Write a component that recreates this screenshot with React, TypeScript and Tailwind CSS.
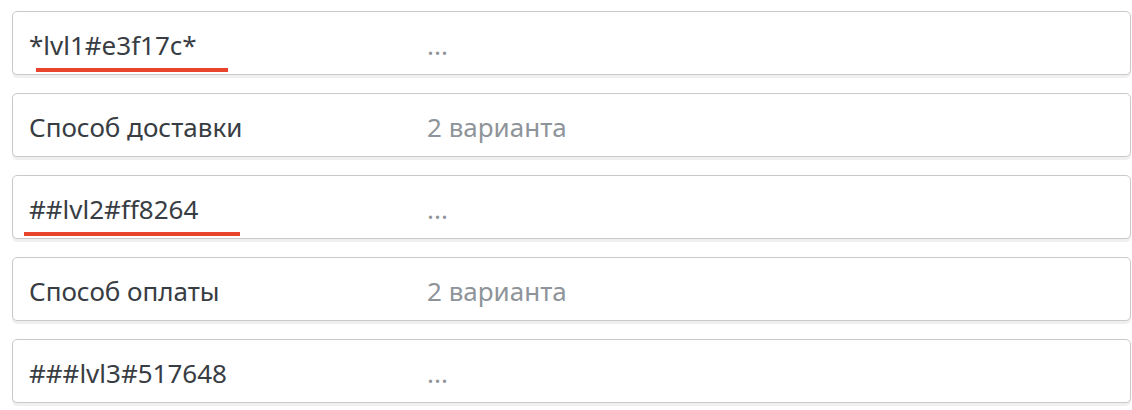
import React from "react";

type Row = {
  label: string;
  value: string;
  mark?: { left: number; width: number };
};

const rows: Row[] = [
  { label: "*lvl1#e3f17c*", value: "...", mark: { left: 23, width: 192 } },
  { label: "Способ доставки", value: "2 варианта" },
  { label: "##lvl2#ff8264", value: "...", mark: { left: 11, width: 216 } },
  { label: "Способ оплаты", value: "2 варианта" },
  { label: "###lvl3#517648", value: "..." },
];

function FieldRow({ row }: { row: Row }) {
  return (
    <div className="relative flex items-center h-[64px] rounded-[5px] border border-[#c9c9c9] bg-white pl-4 pt-[5px] shadow-[0_3px_0_#efefef]">
      <span className="w-[398px] shrink-0 text-[26px] text-[#383d43]">{row.label}</span>
      <span className="text-[26px] text-[#8e9499]">{row.value}</span>
      {row.mark && (
        <div
          className="absolute bottom-[2px] h-[4px] bg-[#e8432b]"
          style={{ left: row.mark.left, width: row.mark.width }}
        />
      )}
    </div>
  );
}

export default function App() {
  return (
    <div
      className="flex flex-col gap-[18px] bg-white pt-[11px] pl-[12px] pr-[1px] h-[410px]"
      style={{ fontFamily: '"Noto Sans", "Open Sans", sans-serif' }}
    >
      {rows.map((row, i) => (
        <FieldRow key={i} row={row} />
      ))}
    </div>
  );
}
